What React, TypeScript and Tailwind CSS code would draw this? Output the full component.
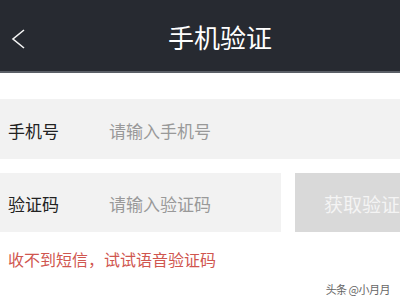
const cjk = { fontFamily: '"Noto Sans CJK SC", "Noto Sans", sans-serif' };

export default function App() {
  return (
    <div className="w-[400px] h-[300px] bg-white overflow-hidden relative" style={cjk}>
      {/* Top bar */}
      <div className="h-[73px] bg-[#272a31] border-b-2 border-[#5a5f66] relative">
        <svg className="absolute left-[10px] top-[28px]" width="18" height="22" viewBox="0 0 18 22">
          <polyline points="14,2 3,11 14,20" fill="none" stroke="#f5f5f5" strokeWidth="1.6" />
        </svg>
        <div className="absolute left-[168px] top-[19px] text-[26px] leading-[36px] text-white">手机验证</div>
      </div>

      <div className="mt-[26px] h-[60px] pt-[3px] bg-[#f2f2f2] flex items-center">
        <span className="ml-[8px] w-[101px] text-[17px] text-[#222]">手机号</span>
        <span className="text-[17px] text-[#999]">请输入手机号</span>
      </div>

      <div className="mt-[14px] flex h-[59px]">
        <div className="w-[281px] pt-[3px] bg-[#f2f2f2] flex items-center">
          <span className="ml-[8px] w-[101px] text-[17px] text-[#222]">验证码</span>
          <span className="text-[17px] text-[#999]">请输入验证码</span>
        </div>
        <div className="ml-[14px] flex-1 pt-[3px] bg-[#d9d9d9] flex items-center overflow-hidden">
          <span className="ml-[29px] text-[19px] text-[#f4f4f4] whitespace-nowrap">获取验证码</span>
        </div>
      </div>

      <div className="mt-[15px] ml-[8px] text-[16px] text-[#d0564f] leading-[24px]">收不到短信，试试语音验证码</div>

      <div className="absolute right-[10px] bottom-[3px] text-[11px] text-[#666] tracking-[-0.5px]">头条 @小月月</div>
    </div>
  );
}
